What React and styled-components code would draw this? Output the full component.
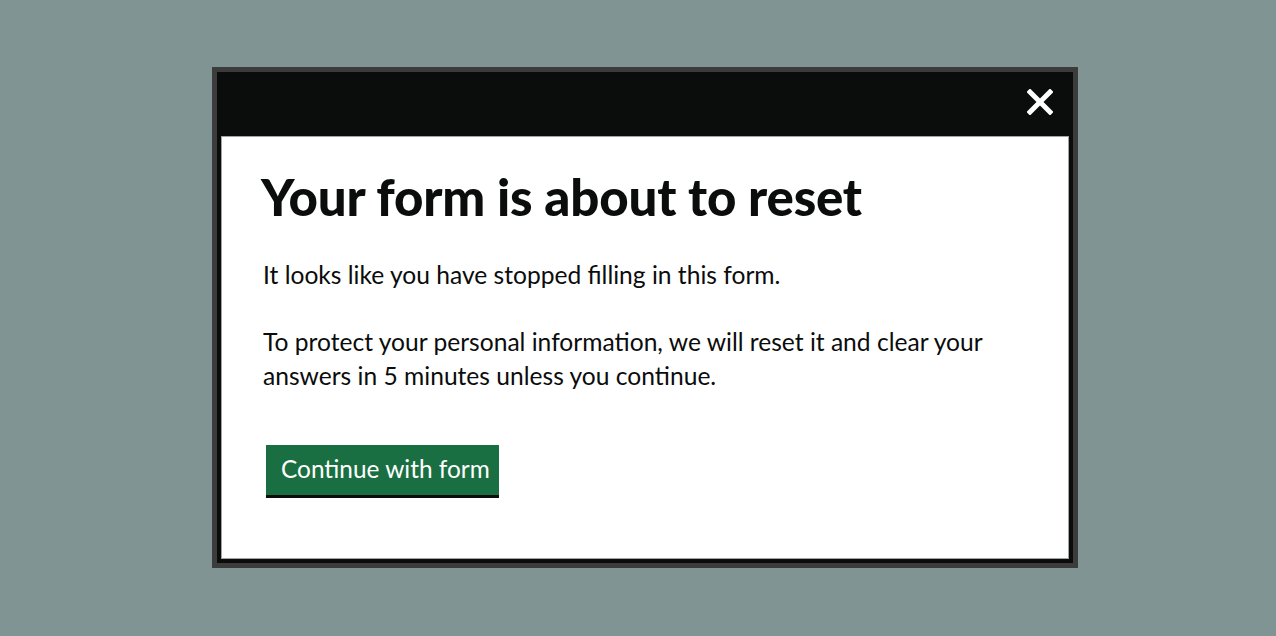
import React from "react";
import styled, { createGlobalStyle } from "styled-components";

const Global = createGlobalStyle`
  html, body { margin: 0; padding: 0; }
  body {
    background: #809593;
    font-family: Lato, "Noto Sans", Arial, sans-serif;
    color: #0b0c0c;
  }
`;

const Page = styled.div`
  width: 1276px;
  height: 636px;
  display: flex;
  justify-content: center;
  align-items: flex-start;
  padding-top: 67px;
  box-sizing: border-box;
  padding-left: 14px;
`;

const Dialog = styled.div`
  width: 866px;
  box-sizing: border-box;
  border: 5px solid #3c3c3d;
  background: #0b0d0c;
  padding: 0 4px 4px 4px;
  display: flex;
  flex-direction: column;
`;

const Header = styled.div`
  height: 64px;
  display: flex;
  align-items: center;
  justify-content: flex-end;
  padding-right: 15px;
`;

const CloseButton = styled.button`
  width: 28px;
  height: 28px;
  margin-top: -4px;
  padding: 0;
  border: 0;
  background: transparent;
  display: flex;
  align-items: center;
  justify-content: center;
  cursor: pointer;
`;

const Body = styled.div`
  background: #fff;
  border: 1px solid #a2a4a4;
  height: 423px;
  box-sizing: border-box;
  padding: 30px 40px 0 39px;
`;

const Title = styled.h2`
  margin: 0 0 31px 0;
  font-family: Lato, "Noto Sans", sans-serif;
  font-weight: 900;
  font-size: 51px;
  line-height: 60px;
  letter-spacing: -0.2px;
  color: #0b0c0c;
`;

const Text = styled.p`
  margin: 0 0 33px 0;
  font-family: Lato, "Noto Sans", sans-serif;
  font-size: 24.6px;
  line-height: 34px;
  color: #0b0c0c;
  max-width: 760px;
  padding-left: 2px;
`;

const Button = styled.button`
  margin: 19px 0 0 5px;
  height: 50px;
  padding: 0 9px 2px 15px;
  border: 0;
  background: #1a6f42;
  box-shadow: 0 3px 0 #0b0c0c;
  color: #fff;
  font-family: Lato, "Noto Sans", sans-serif;
  font-size: 24.4px;
  line-height: 1;
  cursor: pointer;
`;

export default function App() {
  return (
    <>
      <Global />
      <Page>
        <Dialog role="dialog" aria-labelledby="t">
          <Header>
            <CloseButton aria-label="Close">
              <svg width="26" height="26" viewBox="0 0 26 26">
                <path d="M3 3 L23 23 M23 3 L3 23" stroke="#fff" strokeWidth="5" strokeLinecap="square" />
              </svg>
            </CloseButton>
          </Header>
          <Body>
            <Title id="t">Your form is about to reset</Title>
            <Text>It looks like you have stopped filling in this form.</Text>
            <Text>
              To protect your personal information, we will reset it and clear your answers in 5
              minutes unless you continue.
            </Text>
            <Button>Continue with form</Button>
          </Body>
        </Dialog>
      </Page>
    </>
  );
}
